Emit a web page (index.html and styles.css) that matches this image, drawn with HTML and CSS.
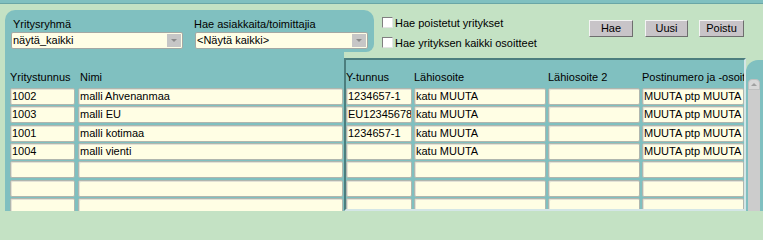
FILE: index.html
```html
<!DOCTYPE html>
<html lang="fi">
<head>
<meta charset="utf-8">
<title>Yritykset</title>
<link rel="stylesheet" href="styles.css">
</head>
<body>
<div class="topbar"></div>
<div class="head">
  <div class="filters">
    <div class="field f1">
      <div class="lbl">Yritysryhmä</div>
      <div class="select"><span>näytä_kaikki</span><i class="drop"></i></div>
    </div>
    <div class="field f2">
      <div class="lbl">Hae asiakkaita/toimittajia</div>
      <div class="select"><span>&lt;Näytä kaikki&gt;</span><i class="drop"></i></div>
    </div>
  </div>
  <div class="checks">
    <div class="chk"><span class="box"></span>Hae poistetut yritykset</div>
    <div class="chk"><span class="box"></span>Hae yrityksen kaikki osoitteet</div>
  </div>
  <div class="buttons">
    <button class="btn b1">Hae</button>
    <button class="btn b2">Uusi</button>
    <button class="btn b3">Poistu</button>
  </div>
</div>
<div class="lower">
  <div class="left">
    <div class="hdr">
      <div class="c-id">Yritystunnus</div>
      <div class="c-name lname">Nimi</div>
    </div>
    <div class="rows">
      <div class="row"><div class="in c-id">1002</div><div class="in c-name">malli Ahvenanmaa</div></div>
      <div class="row"><div class="in c-id">1003</div><div class="in c-name">malli EU</div></div>
      <div class="row"><div class="in c-id">1001</div><div class="in c-name">malli kotimaa</div></div>
      <div class="row"><div class="in c-id">1004</div><div class="in c-name">malli vienti</div></div>
      <div class="row"><div class="in c-id"></div><div class="in c-name"></div></div>
      <div class="row"><div class="in c-id"></div><div class="in c-name"></div></div>
      <div class="row"><div class="in c-id"></div><div class="in c-name"></div></div>
    </div>
  </div>
  <div class="frame">
    <div class="hdr fhdr">
      <div class="c-y">Y-tunnus</div>
      <div class="c-a1">Lähiosoite</div>
      <div class="c-a2">Lähiosoite 2</div>
      <div class="c-p">Postinumero ja -osoite</div>
    </div>
    <div class="rows">
      <div class="row fr"><div class="in c-y">1234657-1</div><div class="in c-a1">katu MUUTA</div><div class="in c-a2"></div><div class="in c-p">MUUTA ptp MUUTA</div></div>
      <div class="row fr"><div class="in c-y">EU123456789</div><div class="in c-a1">katu MUUTA</div><div class="in c-a2"></div><div class="in c-p">MUUTA ptp MUUTA</div></div>
      <div class="row fr"><div class="in c-y">1234657-1</div><div class="in c-a1">katu MUUTA</div><div class="in c-a2"></div><div class="in c-p">MUUTA ptp MUUTA</div></div>
      <div class="row fr"><div class="in c-y"></div><div class="in c-a1">katu MUUTA</div><div class="in c-a2"></div><div class="in c-p">MUUTA ptp MUUTA</div></div>
      <div class="row fr"><div class="in c-y"></div><div class="in c-a1"></div><div class="in c-a2"></div><div class="in c-p"></div></div>
      <div class="row fr"><div class="in c-y"></div><div class="in c-a1"></div><div class="in c-a2"></div><div class="in c-p"></div></div>
      <div class="row fr"><div class="in c-y"></div><div class="in c-a1"></div><div class="in c-a2"></div><div class="in c-p"></div></div>
    </div>
  </div>
  <div class="side">
    <div class="scroll">
      <div class="up"></div>
      <div class="track"></div>
    </div>
  </div>
</div>
</body>
</html>
```
FILE: styles.css
```css
* { box-sizing: border-box; }
html, body { margin: 0; padding: 0; }
html {
  height: 211px;
  overflow: hidden;
  background: #c4e2c4;
}
body {
  width: 763px;
  height: 211px;
  overflow: hidden;
  background: #c4e2c4;
  font-family: "Liberation Sans", Arial, sans-serif;
  font-size: 11px;
  line-height: 13px;
  color: #000;
}
.topbar {
  height: 4px;
  background: #80c0c0;
  border-bottom: 1px solid #6aa6a6;
}
.head {
  display: flex;
  margin-top: 6px;
  height: 42px;
}
.filters {
  margin-left: 5px;
  width: 369px;
  height: 42px;
  background: #80c0c0;
  border-radius: 10px 10px 8px 0;
  padding: 8px 0 0 6px;
  display: flex;
}
.field { display: flex; flex-direction: column; }
.f1 { width: 172px; }
.f1 .lbl { padding-left: 2px; }
.f2 { width: 173px; margin-left: 12px; }
.f2 .lbl { margin-left: -1px; }
.lbl { white-space: nowrap; }
.select {
  margin-top: 1px;
  height: 17px;
  border: 1px solid #a4a8a4;
  border-radius: 2px;
  background: #fffee6;
  position: relative;
  padding-left: 1px;
  line-height: 15px;
  white-space: nowrap;
  overflow: hidden;
}
.drop {
  position: absolute;
  right: 1px;
  top: 1px;
  width: 14px;
  height: 13px;
  background: #c6c6c6;
}
.drop::after {
  content: "";
  position: absolute;
  left: 4px;
  top: 5px;
  border-left: 3px solid transparent;
  border-right: 3px solid transparent;
  border-top: 3px solid #8a8a8a;
}
.checks { padding: 7px 0 0 8px; }
.chk {
  display: flex;
  height: 20px;
  align-items: flex-start;
  white-space: nowrap;
}
.box {
  width: 11px;
  height: 11px;
  background: #fff;
  border: 1px solid;
  border-color: #808080 #e4e4e4 #e4e4e4 #808080;
  margin-right: 2px;
}
.buttons {
  margin-left: auto;
  padding: 10px 19px 0 0;
  display: flex;
  align-items: flex-start;
}
.btn {
  height: 17px;
  background: #c8c4c8;
  border: 1px solid;
  border-color: #f4f4f4 #6e6e6e #6e6e6e #f4f4f4;
  font: inherit;
  color: #000;
  padding: 0;
  line-height: 15px;
  text-align: center;
}
.b1 { width: 44px; }
.b2 { width: 43px; margin-left: 12px; }
.b3 { width: 45px; margin-left: 11px; }

.lower {
  display: flex;
  align-items: flex-start;
}
.left {
  margin-left: 5px;
  width: 339px;
  height: 159px;
  background: #80c0c0;
  padding-left: 5px;
}
.hdr {
  display: flex;
  height: 36px;
  align-items: flex-end;
  padding-bottom: 4px;
  gap: 3px;
  white-space: nowrap;
}
.lname { padding-left: 2px; }
.rows {
  display: flex;
  flex-direction: column;
  gap: 1.333px;
}
.row { display: flex; gap: 3px; }
.c-id { width: 65px; flex: none; }
.c-name { width: 265px; flex: none; }
.in {
  height: 17px;
  background: #fffee4;
  border: 1px solid #b0b6ae;
  border-radius: 2px;
  box-shadow: inset 1px 1px 0 #e2e2d6;
  padding-left: 1px;
  line-height: 15px;
  white-space: nowrap;
  overflow: hidden;
}
.frame {
  margin-top: 6px;
  width: 402px;
  height: 153px;
  border: 2px solid;
  border-color: #4c7e7e #d4e6e6 #d4e6e6 #4c7e7e;
  background: #80c0c0;
  overflow: hidden;
}
.fhdr { height: 28px; gap: 2px; }
.fhdr > div { overflow: hidden; }
.fr { gap: 2px; }
.c-y { width: 66px; flex: none; }
.c-a1 { width: 132px; flex: none; }
.c-a2 { width: 92px; flex: none; }
.c-p { width: 102px; flex: none; }
.side {
  width: 17px;
  margin-top: 8px;
  height: 151px;
  background: #80c0c0;
  border-top-left-radius: 12px;
  padding: 19px 0 0 2px;
}
.scroll {
  width: 12px;
  height: 132px;
  display: flex;
  flex-direction: column;
}
.up {
  height: 11px;
  background: #d8d8d8;
  border: 1px solid #c0c0c0;
  border-radius: 4px 4px 0 0;
  position: relative;
}
.up::after {
  content: "";
  position: absolute;
  left: 2px;
  top: 3px;
  border-left: 3px solid transparent;
  border-right: 3px solid transparent;
  border-bottom: 3px solid #a0a0a0;
}
.track {
  flex: 1;
  background: #cccccc;
}
```
